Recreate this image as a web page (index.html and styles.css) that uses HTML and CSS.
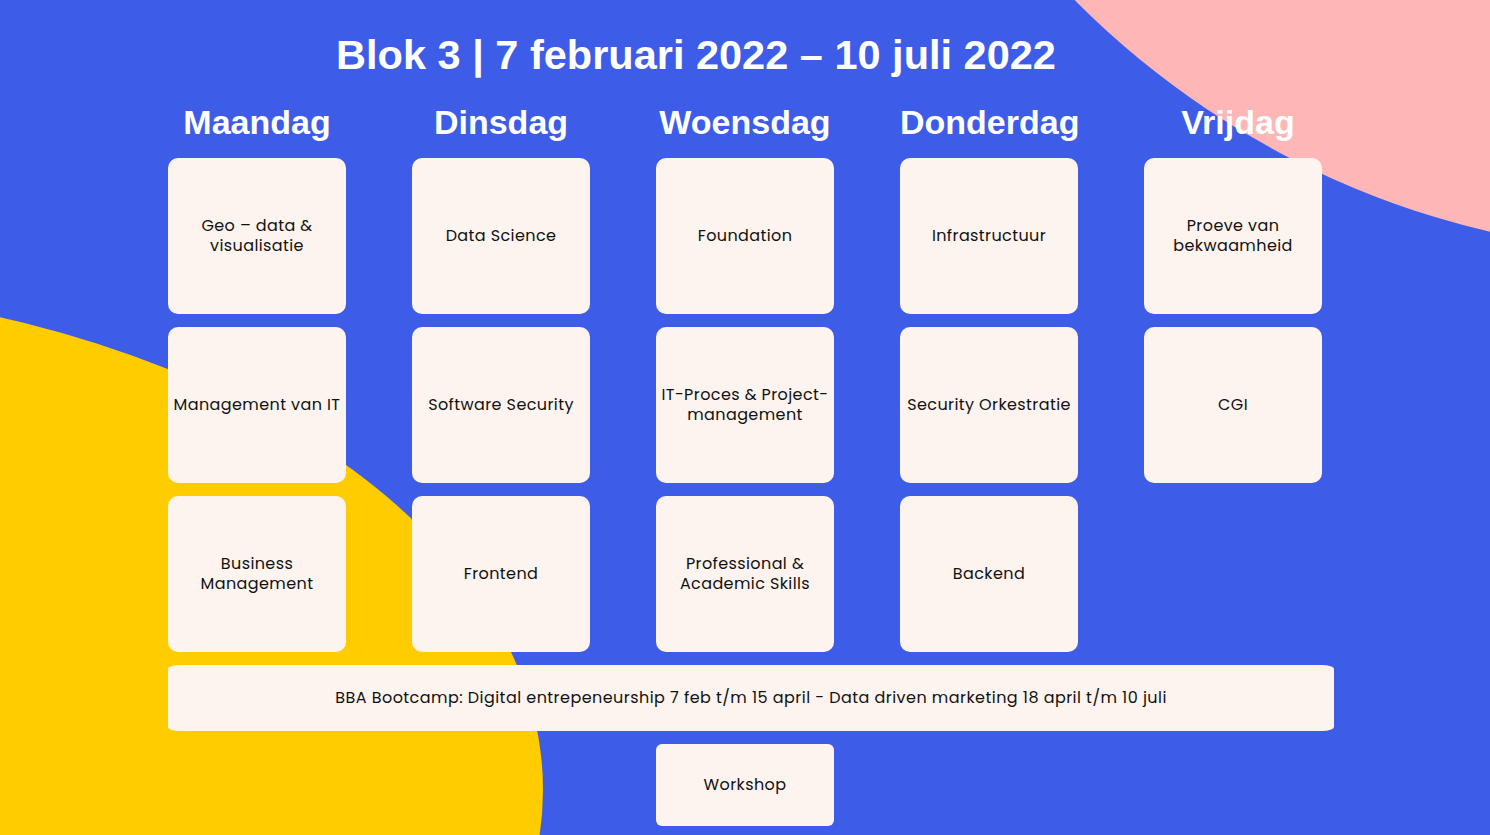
FILE: index.html
```html
<!DOCTYPE html>
<html lang="en">
<head>
  <meta charset="UTF-8" />
  <meta name="viewport" content="width=device-width, initial-scale=1.0"/>
  <title>Rooster Blok 3</title>
  <link rel="stylesheet" href="styles.css">
</head>
<body>
  <div class="backdrop">
    <div class="blob blob-pink"></div>
    <div class="blob blob-yellow"></div>
  </div>

  <main class="schedule">
    <h1>Blok 3 | 7 februari 2022 – 10 juli 2022</h1>

    <div class="week">
      <h2>Maandag</h2>
      <h2>Dinsdag</h2>
      <h2>Woensdag</h2>
      <h2>Donderdag</h2>
      <h2 class="friday">Vrijdag</h2>

      <div class="card">Geo – data &amp;<br>visualisatie</div>
      <div class="card">Data Science</div>
      <div class="card">Foundation</div>
      <div class="card">Infrastructuur</div>
      <div class="card">Proeve van<br>bekwaamheid</div>

      <div class="card">Management van IT</div>
      <div class="card">Software Security</div>
      <div class="card">IT-Proces &amp; Project-<br>management</div>
      <div class="card">Security Orkestratie</div>
      <div class="card">CGI</div>

      <div class="card">Business<br>Management</div>
      <div class="card">Frontend</div>
      <div class="card">Professional &amp;<br>Academic Skills</div>
      <div class="card">Backend</div>

      <div class="card banner">BBA Bootcamp: Digital entrepeneurship 7 feb t/m 15 april - Data driven marketing 18 april t/m 10 juli</div>

      <div class="card workshop">Workshop</div>
    </div>
  </main>
</body>
</html>
```

FILE: styles.css
```css
body {
  margin: 0;
  height: 835px;
  overflow: hidden;
  position: relative;
  background-color: #3d5de8;
  font-family: 'Poppins', 'Inter', sans-serif;
}

.backdrop {
  position: absolute;
  top: 0;
  left: 0;
  right: 0;
  bottom: 0;
  overflow: hidden;
  z-index: 0;
}

.blob {
  position: absolute;
  border-radius: 50%;
}

.blob-pink {
  left: 826px;
  top: -1462px;
  width: 1716px;
  height: 1716px;
  background-color: #ffb6b6;
}

.blob-yellow {
  left: -1143px;
  top: 284px;
  width: 1686px;
  height: 1012px;
  background-color: #ffcc00;
}

.schedule {
  position: relative;
  z-index: 1;
  padding-top: 31px;
}

h1 {
  margin: 0 98px 23px 0;
  text-align: center;
  font-family: 'Liberation Sans', Arial, sans-serif;
  font-size: 41.5px;
  line-height: 48px;
  font-weight: bold;
  color: #fff;
}

.week {
  display: grid;
  grid-template-columns: repeat(5, 178px);
  column-gap: 66px;
  row-gap: 13px;
  margin-left: 168px;
}

h2 {
  margin: 0 0 3px;
  text-align: center;
  font-family: 'Liberation Sans', Arial, sans-serif;
  font-size: 34px;
  line-height: 40px;
  font-weight: bold;
  color: #fff;
  white-space: nowrap;
}

.friday {
  padding-left: 10px;
}

.card {
  height: 156px;
  display: flex;
  align-items: center;
  justify-content: center;
  text-align: center;
  background-color: #fdf4ef;
  border-radius: 10px;
  color: #111;
  font-size: 16px;
  line-height: 20px;
  letter-spacing: 0.4px;
  white-space: nowrap;
}

.banner {
  grid-column: 1 / -1;
  height: 66px;
  margin-right: -12px;
  border-radius: 12px / 4px;
  letter-spacing: 0.45px;
}

.workshop {
  grid-column: 3;
  height: 82px;
  border-radius: 6px;
}
```
